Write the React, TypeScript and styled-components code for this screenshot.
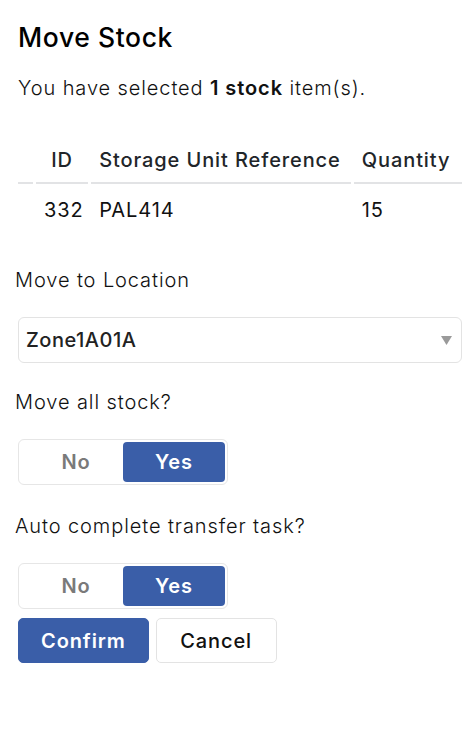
import React, { useState } from "react";
import styled, { createGlobalStyle } from "styled-components";

const GlobalStyle = createGlobalStyle`
  body {
    margin: 0;
    background: #fff;
    font-family: Inter, "Noto Sans", sans-serif;
    color: #111;
  }
`;

const Page = styled.div`
  width: 475px;
  box-sizing: border-box;
  padding: 22px 13px 0 16px;
  font-size: 20px;
  line-height: 30px;
  letter-spacing: 0.9px;
`;

const Title = styled.h2`
  margin: 0 0 20px 2px;
  font-size: 26.5px;
  line-height: 31px;
  font-weight: 500;
  letter-spacing: 0.6px;
  color: #000;
`;

const Intro = styled.p`
  margin: 0 0 29px 2px;
  font-weight: 300;

  b {
    font-weight: 600;
  }
`;

const Table = styled.table`
  table-layout: fixed;
  width: 450px;
  margin: 0 0 29px -1px;
  border-collapse: separate;
  border-spacing: 3px;
  color: #212529;
`;

const Th = styled.th<{ $center?: boolean }>`
  padding: 10px 8px 7px;
  font-weight: 500;
  text-align: ${(p) => (p.$center ? "center" : "left")};
  border-bottom: 2px solid #e2e3e5;
`;

const Td = styled.td<{ $center?: boolean }>`
  padding: 8px 8px;
  font-weight: 400;
  text-align: ${(p) => (p.$center ? "center" : "left")};
  color: #111;
`;

const Form = styled.div`
  display: flex;
  flex-direction: column;
  gap: 24px;
`;

const Field = styled.div`
  display: flex;
  flex-direction: column;
`;

const Label = styled.div`
  margin: 0 0 22px -1px;
  font-weight: 300;
`;

const Select = styled.div`
  box-sizing: border-box;
  display: flex;
  align-items: center;
  justify-content: space-between;
  height: 46px;
  margin-left: 2px;
  padding: 0 9px 0 7px;
  border: 1px solid #e3e3e3;
  border-radius: 6px;
  font-weight: 500;
  letter-spacing: 0.5px;
  color: #222;
`;

const Toggle = styled.div`
  box-sizing: border-box;
  display: flex;
  width: 210px;
  height: 46px;
  margin: 0 0 2px 2px;
  padding: 2px;
  border: 1px solid #e6e6e6;
  border-radius: 6px;
`;

const ToggleOption = styled.button<{ $active: boolean }>`
  flex: 1 1 0;
  padding: 0;
  border: 0;
  border-radius: 4px;
  font: inherit;
  font-weight: 600;
  letter-spacing: 0.9px;
  text-indent: ${(p) => (p.$active ? "0" : "8px")};
  cursor: pointer;
  background: ${(p) => (p.$active ? "#3a5ea8" : "transparent")};
  color: ${(p) => (p.$active ? "#fff" : "#7a7a7a")};
`;

const Actions = styled.div`
  display: flex;
  gap: 7px;
  margin: 7px 0 0 2px;
`;

const Button = styled.button<{ $primary?: boolean }>`
  box-sizing: border-box;
  height: 45px;
  padding: 0 ${(p) => (p.$primary ? "22px" : "23.5px")};
  border: 1px solid ${(p) => (p.$primary ? "#3a5ea8" : "#e3e3e3")};
  border-radius: 5px;
  font: inherit;
  font-weight: ${(p) => (p.$primary ? 600 : 500)};
  letter-spacing: 0.9px;
  background: ${(p) => (p.$primary ? "#3a5ea8" : "#fff")};
  color: ${(p) => (p.$primary ? "#fff" : "#111")};
  cursor: pointer;
`;

function Caret() {
  return (
    <svg width="11" height="9" viewBox="0 0 11 9">
      <path d="M0 0h11L5.5 9z" fill="#9a9a9a" />
    </svg>
  );
}

function YesNo({ value, onChange }: { value: boolean; onChange: (v: boolean) => void }) {
  return (
    <Toggle>
      <ToggleOption $active={!value} onClick={() => onChange(false)}>
        No
      </ToggleOption>
      <ToggleOption $active={value} onClick={() => onChange(true)}>
        Yes
      </ToggleOption>
    </Toggle>
  );
}

export default function App() {
  const [moveAll, setMoveAll] = useState(true);
  const [autoComplete, setAutoComplete] = useState(true);

  return (
    <Page>
      <GlobalStyle />
      <Title>Move Stock</Title>
      <Intro>
        You have selected <b>1 stock</b> item(s).
      </Intro>

      <Table>
        <colgroup>
          <col style={{ width: 15 }} />
          <col style={{ width: 52 }} />
          <col style={{ width: 259 }} />
          <col style={{ width: 108 }} />
        </colgroup>
        <thead>
          <tr>
            <Th />
            <Th $center>ID</Th>
            <Th>Storage Unit Reference</Th>
            <Th>Quantity</Th>
          </tr>
        </thead>
        <tbody>
          <tr>
            <Td />
            <Td $center>332</Td>
            <Td>PAL414</Td>
            <Td>15</Td>
          </tr>
        </tbody>
      </Table>

      <Form>
        <Field>
          <Label>Move to Location</Label>
          <Select>
            Zone1A01A
            <Caret />
          </Select>
        </Field>

        <Field>
          <Label>Move all stock?</Label>
          <YesNo value={moveAll} onChange={setMoveAll} />
        </Field>

        <Field>
          <Label>Auto complete transfer task?</Label>
          <YesNo value={autoComplete} onChange={setAutoComplete} />
        </Field>
      </Form>

      <Actions>
        <Button $primary>Confirm</Button>
        <Button>Cancel</Button>
      </Actions>
    </Page>
  );
}
